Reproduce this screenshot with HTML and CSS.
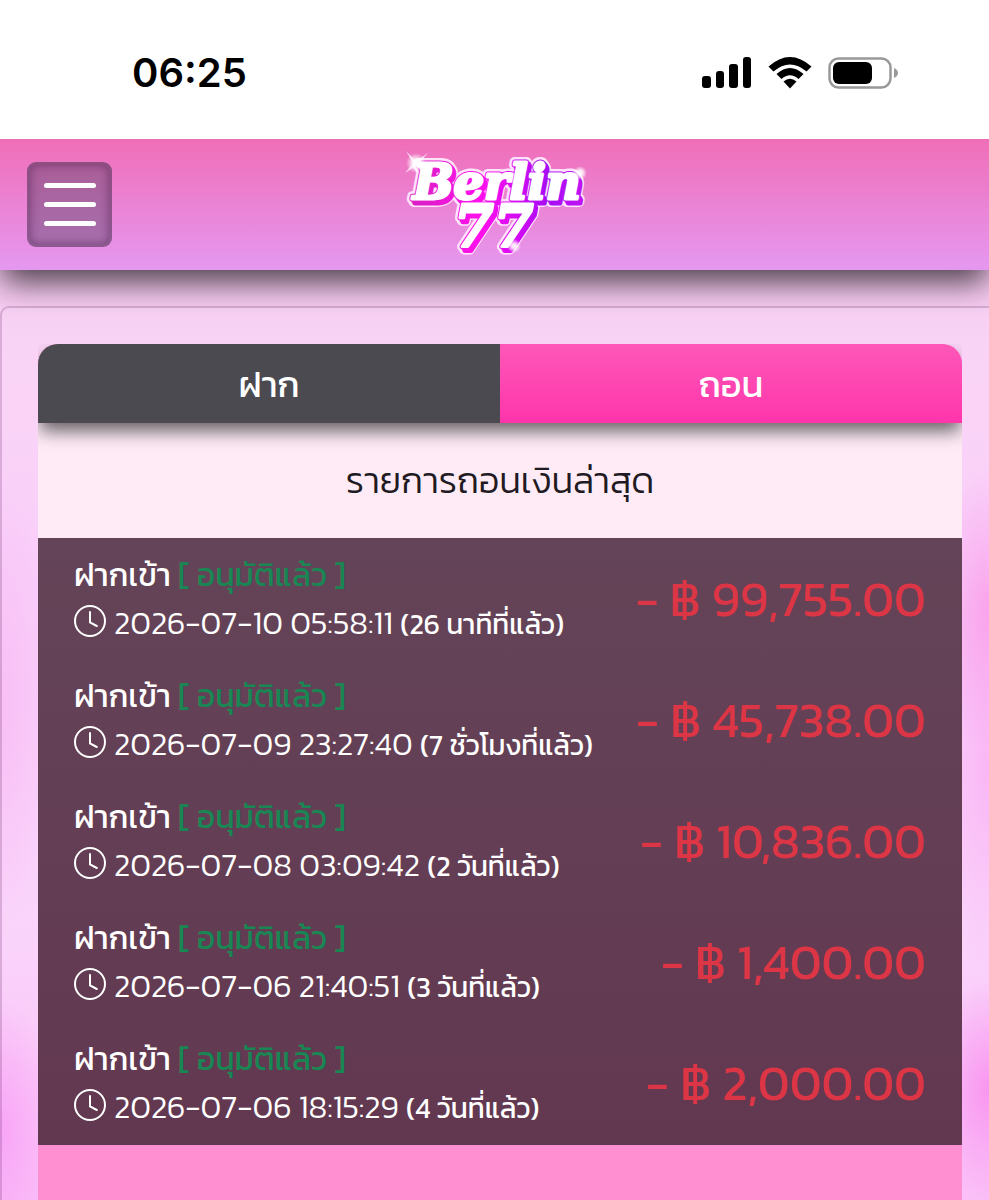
FILE: index.html
```
<!DOCTYPE html>
<html lang="th">
<head>
    <meta charset="utf-8">
    <meta name="viewport" content="width=device-width, initial-scale=1">
    <title>Berlin77</title>
    <link rel="stylesheet" href="styles.css">
</head>
<body>
    <!-- Status bar -->
    <div class="status-bar">
        <span class="time">06:25</span>
        <div class="status-icons">
            <svg width="50" height="32" viewBox="0 0 50 32">
                <rect x="0" y="19" width="9" height="12" rx="3"/>
                <rect x="14" y="14" width="8" height="17" rx="3"/>
                <rect x="27" y="7" width="9" height="24" rx="3"/>
                <rect x="41" y="0" width="8" height="31" rx="3"/>
            </svg>
            <svg width="44" height="32" viewBox="0 0 44 32">
                <path d="M0.5 9.5 Q22 -9.5 43.500 9.500 L38.500 14.500 Q22 0.500 5.500 14.500 Z"/>
                <path d="M8.500 17 Q22 5 35.500 17 L30.500 22 Q22 14.500 13.500 22 Z"/>
                <path d="M15.500 24.500 Q22 19 28.500 24.500 L22 31.500 Z"/>
            </svg>
            <svg width="70" height="32" viewBox="0 0 70 32">
                <rect x="1.500" y="1.500" width="61" height="29" rx="9" fill="none" stroke="#999" stroke-width="2.500"/>
                <rect x="5" y="5" width="39" height="22" rx="6"/>
                <path d="M66 11 Q70 13 70 16 Q70 19 66 21 Z" fill="#999"/>
            </svg>
        </div>
    </div>

    <!-- Header -->
    <header class="header">
        <button class="menu-btn" type="button" aria-label="เมนู">
            <span></span>
            <span></span>
            <span></span>
        </button>
        <a class="logo" href="#" aria-label="Berlin77">
            <svg width="190" height="112" viewBox="0 0 190 112">
                <defs>
                    <linearGradient id="depth" gradientUnits="userSpaceOnUse" x1="10" y1="0" x2="180" y2="0">
                        <stop offset="0" stop-color="#d91fc4"/>
                        <stop offset="0.4" stop-color="#ff0fec"/>
                        <stop offset="0.6" stop-color="#d80cf2"/>
                        <stop offset="0.8" stop-color="#a60cf5"/>
                        <stop offset="1" stop-color="#c012f5"/>
                    </linearGradient>
                    <radialGradient id="glow">
                        <stop offset="0" stop-color="#fff"/>
                        <stop offset="0.4" stop-color="#fff" stop-opacity="0.8"/>
                        <stop offset="1" stop-color="#fff" stop-opacity="0"/>
                    </radialGradient>
                    <g id="word">
                        <text x="13" y="50" font-size="48">Berlin</text>
                        <text x="54" y="97" font-size="57">77</text>
                    </g>
                </defs>
                <use href="#word" class="logo-outline"/>
                <use href="#word" class="logo-outline" x="2" y="3"/>
                <use href="#word" class="logo-depth" x="3" y="4"/>
                <use href="#word" class="logo-depth" x="2" y="2"/>
                <use href="#word" class="logo-depth"/>
                <use href="#word" class="logo-face"/>
                <circle cx="16" cy="14" r="10" fill="url(#glow)"/>
                <path d="M6 2 L16 12 L28 4 L19 14 L26 26 L16 17 L5 24 L13 14 Z" fill="#fff" opacity="0.7"/>
                <circle cx="180" cy="24" r="7" fill="url(#glow)"/>
                <circle cx="114" cy="97" r="7" fill="url(#glow)"/>
            </svg>
        </a>
    </header>

    <main class="page">
        <div class="panel">
            <div class="history">
                <div class="tabs">
                    <button class="tab" type="button">ฝาก</button>
                    <button class="tab active" type="button">ถอน</button>
                </div>
                <h1 class="title">รายการถอนเงินล่าสุด</h1>
                <ul class="list">
                    <li class="item">
                        <div class="info">
                            <div class="type">ฝากเข้า <span class="status">[ อนุมัติแล้ว ]</span></div>
                            <div class="date">
                                <svg class="clock" viewBox="0 0 16 16"><path d="M8 3.500v5.200l3.400 1.800"/><circle cx="8" cy="8" r="7.500"/></svg>
                                <span>2026-07-10 05:58:11 <small>(26 นาทีที่แล้ว)</small></span>
                            </div>
                        </div>
                        <div class="amount">- ฿ 99,755.00</div>
                    </li>
                    <li class="item">
                        <div class="info">
                            <div class="type">ฝากเข้า <span class="status">[ อนุมัติแล้ว ]</span></div>
                            <div class="date">
                                <svg class="clock" viewBox="0 0 16 16"><path d="M8 3.500v5.200l3.400 1.800"/><circle cx="8" cy="8" r="7.500"/></svg>
                                <span>2026-07-09 23:27:40 <small>(7 ชั่วโมงที่แล้ว)</small></span>
                            </div>
                        </div>
                        <div class="amount">- ฿ 45,738.00</div>
                    </li>
                    <li class="item">
                        <div class="info">
                            <div class="type">ฝากเข้า <span class="status">[ อนุมัติแล้ว ]</span></div>
                            <div class="date">
                                <svg class="clock" viewBox="0 0 16 16"><path d="M8 3.500v5.200l3.400 1.800"/><circle cx="8" cy="8" r="7.500"/></svg>
                                <span>2026-07-08 03:09:42 <small>(2 วันที่แล้ว)</small></span>
                            </div>
                        </div>
                        <div class="amount">- ฿ 10,836.00</div>
                    </li>
                    <li class="item">
                        <div class="info">
                            <div class="type">ฝากเข้า <span class="status">[ อนุมัติแล้ว ]</span></div>
                            <div class="date">
                                <svg class="clock" viewBox="0 0 16 16"><path d="M8 3.500v5.200l3.400 1.800"/><circle cx="8" cy="8" r="7.500"/></svg>
                                <span>2026-07-06 21:40:51 <small>(3 วันที่แล้ว)</small></span>
                            </div>
                        </div>
                        <div class="amount">- ฿ 1,400.00</div>
                    </li>
                    <li class="item">
                        <div class="info">
                            <div class="type">ฝากเข้า <span class="status">[ อนุมัติแล้ว ]</span></div>
                            <div class="date">
                                <svg class="clock" viewBox="0 0 16 16"><path d="M8 3.500v5.200l3.400 1.800"/><circle cx="8" cy="8" r="7.500"/></svg>
                                <span>2026-07-06 18:15:29 <small>(4 วันที่แล้ว)</small></span>
                            </div>
                        </div>
                        <div class="amount">- ฿ 2,000.00</div>
                    </li>
                </ul>
            </div>
        </div>
    </main>
</body>
</html>
```
FILE: styles.css
```
* {
    box-sizing: border-box;
}
html {
    height: 100%;
}
body {
    margin: 0;
    height: 100%;
    display: flex;
    flex-direction: column;
    overflow: hidden;
    font-family: "Kanit", "Noto Sans", "Noto Sans Thai", sans-serif;
    font-weight: 300;
    background: #fff;
}

/* Status bar */
.status-bar {
    flex: none;
    display: flex;
    justify-content: space-between;
    align-items: center;
    padding: 49px 91px 42px 132px;
    background: #fff;
}
.time {
    font-family: "Inter", sans-serif;
    font-size: 40px;
    font-weight: 600;
    line-height: 48px;
    color: #000;
}
.status-icons {
    display: flex;
    align-items: center;
    gap: 16px;
}
.status-icons svg {
    display: block;
}

/* Header */
.header {
    flex: none;
    position: relative;
    z-index: 1;
    display: grid;
    grid-template-columns: 1fr auto 1fr;
    align-items: center;
    height: 131px;
    padding: 0 27px;
    background: linear-gradient(#f06eb8, #e598f0);
    box-shadow: 0 14px 30px -2px rgba(0,0,0,0.7);
    clip-path: inset(0 0 -60px 0);
}
.menu-btn {
    display: flex;
    flex-direction: column;
    justify-content: center;
    align-items: center;
    gap: 14px;
    width: 85px;
    height: 85px;
    padding: 0;
    border: 3px solid rgba(90,50,90,0.35);
    border-radius: 9px;
    background: rgba(70,60,90,0.4);
    box-shadow: inset 0 0 10px rgba(70,20,70,0.5);
    cursor: pointer;
}
.menu-btn span {
    width: 52px;
    height: 5px;
    border-radius: 3px;
    background: #fff;
}
.logo svg {
    display: block;
    overflow: visible;
    font-family: "DejaVu Serif", serif;
    font-weight: bold;
    font-style: italic;
}
.logo-outline {
    fill: #fff;
    stroke: #ffe3fb;
    stroke-width: 10px;
    stroke-linejoin: round;
}
.logo-depth {
    fill: url(#depth);
    stroke: url(#depth);
    stroke-width: 5px;
    stroke-linejoin: round;
}
.logo-face {
    fill: #fff;
    stroke: #fff;
    stroke-width: 3px;
    stroke-linejoin: round;
}

/* Page */
.page {
    flex: 1;
    display: flex;
    padding-top: 36px;
    background:
        radial-gradient(ellipse 60px 200px at 100% 500px, rgba(250,130,235,0.4), transparent),
        radial-gradient(ellipse 60px 110px at 100% 820px, rgba(248,120,235,0.75), transparent),
        radial-gradient(ellipse 60px 140px at 100% 340px, rgba(250,130,225,0.65), transparent),
        radial-gradient(ellipse 60px 220px at 0 440px, rgba(248,170,240,0.6), transparent),
        radial-gradient(ellipse 60px 130px at 0 860px, rgba(248,140,245,0.7), transparent),
        linear-gradient(#f6c9f0, #fad0f6 100px, #f9c9fa 300px, #fad0fb 650px, #fab8f6);
}
.panel {
    flex: 1;
    padding: 36px 27px 0 36px;
    border: solid rgba(120,60,120,0.25);
    border-width: 2px 0 0 2px;
    border-top-left-radius: 9px;
    background: rgba(255,255,255,0.1);
}
.history {
    min-height: 100%;
    border-radius: 20px 20px 0 0;
    background: #ff8fd0;
}
.tabs {
    position: relative;
    display: flex;
    border-radius: 20px 20px 0 0;
    box-shadow: 0 10px 18px -2px rgba(0,0,0,0.6);
    clip-path: inset(0 0 -40px 0);
}
.tab {
    flex: 1;
    height: 79px;
    padding: 0;
    border: 0;
    background: #4b4a50;
    color: #fff;
    font-family: inherit;
    font-size: 36px;
    font-weight: 400;
    cursor: pointer;
}
.tab:first-child {
    border-top-left-radius: 20px;
}
.tab:last-child {
    border-top-right-radius: 20px;
}
.tab.active {
    background: linear-gradient(#fd57b8, #ff35ab);
}
.title {
    margin: 0;
    padding: 33px 0 34px;
    background: #feebf6;
    color: #211a22;
    font-size: 36px;
    font-weight: 300;
    line-height: 48px;
    text-align: center;
}
.list {
    margin: 0;
    padding: 1px 0;
    list-style: none;
    background: linear-gradient(#644458, #623850);
}
.item {
    display: flex;
    justify-content: space-between;
    align-items: center;
    padding: 12px 36px 13px;
    color: #fff;
    font-size: 32px;
    line-height: 48px;
    white-space: nowrap;
}
.type {
    font-weight: 400;
}
.status {
    color: #198754;
}
.date {
    display: flex;
    align-items: center;
    gap: 8px;
}
.date small {
    font-size: 28px;
    font-weight: 400;
    line-height: 1;
}
.clock {
    width: 32px;
    height: 32px;
    margin-bottom: 4px;
    fill: none;
    stroke: #fff;
    stroke-width: 1;
    stroke-linecap: round;
}
.amount {
    color: #dc3545;
    font-size: 49px;
    font-weight: 400;
}
```
